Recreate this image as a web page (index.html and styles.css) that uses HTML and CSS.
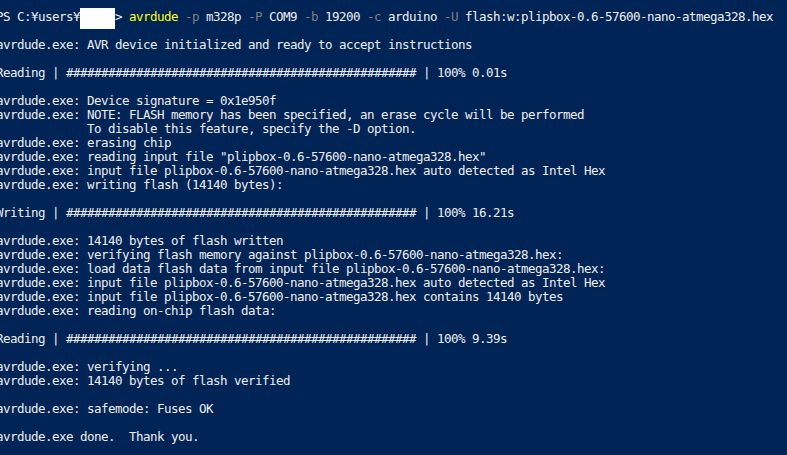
FILE: index.html
```html
<!DOCTYPE html>
<html lang="en">
<head>
<meta charset="utf-8">
<title>PowerShell - avrdude</title>
<link rel="stylesheet" href="styles.css">
</head>
<body>
<pre class="console">PS C:¥users¥<span class="redact"><span class="redact-box"></span>     </span>&gt; <span class="cmd">avrdude</span> <span class="param">-p</span> m328p <span class="param">-P</span> COM9 <span class="param">-b</span> 19200 <span class="param">-c</span> arduino <span class="param">-U</span> flash:w:plipbox-0.6-57600-nano-atmega328.hex

avrdude.exe: AVR device initialized and ready to accept instructions

Reading | ################################################## | 100% 0.01s

avrdude.exe: Device signature = 0x1e950f
avrdude.exe: NOTE: FLASH memory has been specified, an erase cycle will be performed
             To disable this feature, specify the -D option.
avrdude.exe: erasing chip
avrdude.exe: reading input file "plipbox-0.6-57600-nano-atmega328.hex"
avrdude.exe: input file plipbox-0.6-57600-nano-atmega328.hex auto detected as Intel Hex
avrdude.exe: writing flash (14140 bytes):

Writing | ################################################## | 100% 16.21s

avrdude.exe: 14140 bytes of flash written
avrdude.exe: verifying flash memory against plipbox-0.6-57600-nano-atmega328.hex:
avrdude.exe: load data flash data from input file plipbox-0.6-57600-nano-atmega328.hex:
avrdude.exe: input file plipbox-0.6-57600-nano-atmega328.hex auto detected as Intel Hex
avrdude.exe: input file plipbox-0.6-57600-nano-atmega328.hex contains 14140 bytes
avrdude.exe: reading on-chip flash data:

Reading | ################################################## | 100% 9.39s

avrdude.exe: verifying ...
avrdude.exe: 14140 bytes of flash verified

avrdude.exe: safemode: Fuses OK

avrdude.exe done.  Thank you.
</pre>
</body>
</html>
```

FILE: styles.css
```css
html, body {
  margin: 0;
  padding: 0;
  background: #012456;
  overflow: hidden;
}

body {
  width: 787px;
  height: 455px;
}

.console {
  margin: 0 0 0 -4px;
  padding: 10px 0 0 0;
  font-family: "DejaVu Sans Mono", "Liberation Mono", monospace;
  font-size: 12.5px;
  letter-spacing: -0.526px;
  line-height: 14px;
  color: #eeedf0;
  white-space: pre;
}

.cmd {
  color: #ffff00;
}

.param {
  color: #808080;
}

.redact {
  position: relative;
}

.redact-box {
  position: absolute;
  left: 0;
  top: -1px;
  width: 35px;
  height: 21px;
  background: #ffffff;
}
```
